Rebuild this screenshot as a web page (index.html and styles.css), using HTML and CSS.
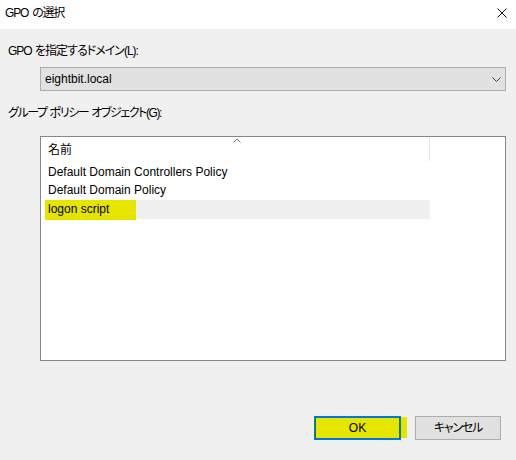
FILE: index.html
```html
<!DOCTYPE html>
<html lang="ja">
<head>
<meta charset="utf-8">
<title>GPO の選択</title>
<link rel="stylesheet" href="styles.css">
</head>
<body>
<div class="dialog">
  <div class="titlebar">
    <span class="title jp">GPO の選択</span>
    <svg class="close" width="10" height="10" viewBox="0 0 10 10"><path d="M0.5 0.5 L9.5 9.5 M9.5 0.5 L0.5 9.5" stroke="#111" stroke-width="1" fill="none"/></svg>
  </div>
  <div class="content">
    <div class="label label-domain jp">GPO を指定するドメイン(L):</div>
    <div class="combo">
      <span class="combo-text">eightbit.local</span>
      <svg class="chevron" width="9" height="5" viewBox="0 0 9 5"><path d="M0.5 0.5 L4.5 4.5 L8.5 0.5" stroke="#444" stroke-width="1" fill="none"/></svg>
    </div>
    <div class="label label-gpo jp">グループ ポリシー オブジェクト(G):</div>
    <div class="listbox">
      <div class="list-header">
        <div class="col-name">名前
          <svg class="sort" width="8" height="5" viewBox="0 0 8 5"><path d="M0.5 4.5 L4 1 L7.5 4.5" stroke="#777" stroke-width="1" fill="none"/></svg>
        </div>
        <div class="col-rest"></div>
      </div>
      <div class="row">Default Domain Controllers Policy</div>
      <div class="row">Default Domain Policy</div>
      <div class="row row-selected"><span class="marker">logon script</span></div>
    </div>
    <div class="buttons">
      <button class="btn btn-ok">OK</button>
      <button class="btn btn-cancel">キャンセル</button>
    </div>
  </div>
</div>
</body>
</html>
```
FILE: styles.css
```css
html, body {
  margin: 0;
  padding: 0;
}
body {
  width: 516px;
  height: 460px;
  background: #f0f0f0;
  font-family: "Liberation Sans", "Noto Sans CJK JP", sans-serif;
  font-size: 12px;
  color: #000;
  overflow: hidden;
}
.jp {
  font-feature-settings: "palt";
  letter-spacing: -1px;
}
.dialog {
  width: 516px;
  height: 460px;
  display: flex;
  flex-direction: column;
}
.titlebar {
  height: 29px;
  background: #fff;
  display: flex;
  align-items: center;
  justify-content: space-between;
  padding: 0 9px 0 5px;
  box-sizing: border-box;
}
.title {
  line-height: 16px;
  margin-top: -3px;
  letter-spacing: -1.2px;
  word-spacing: 2px;
}
.close {
  display: block;
  margin-top: -3px;
}
.content {
  display: flex;
  flex-direction: column;
  padding: 0 10px 0 8px;
}
.label {
  line-height: 16px;
  height: 16px;
}
.label-domain {
  margin-top: 14px;
  word-spacing: 1px;
}
.combo {
  margin: 8px 0 0 32px;
  height: 24px;
  box-sizing: border-box;
  border: 1px solid #adadad;
  background: #e1e1e1;
  display: flex;
  align-items: center;
  justify-content: space-between;
  padding: 0 4px 0 4px;
}
.combo-text {
  line-height: 16px;
}
.chevron {
  display: block;
}
.label-gpo {
  margin-top: 14px;
  letter-spacing: -1.4px;
  word-spacing: 1px;
}
.listbox {
  margin: 15px 0 0 32px;
  height: 225px;
  box-sizing: border-box;
  border: 1px solid #828790;
  background: #fff;
  display: flex;
  flex-direction: column;
}
.list-header {
  height: 25px;
  display: flex;
  flex-shrink: 0;
}
.col-name {
  position: relative;
  width: 389px;
  box-sizing: border-box;
  padding-left: 7px;
  border-right: 1px solid #e5e5e5;
  margin: 1px 0 0 0;
  height: 23px;
  line-height: 24px;
}
.sort {
  position: absolute;
  left: 192px;
  top: 0px;
}
.row {
  height: 19px;
  line-height: 19px;
  margin-left: 4px;
  width: 385px;
  padding-left: 3px;
  box-sizing: border-box;
}
.row:nth-child(2) {
  line-height: 20px;
}
.row-selected {
  background: #f0f0f0;
  padding-left: 0;
}
.marker {
  display: inline-block;
  background: #e5e500;
  width: 91px;
  height: 20px;
  padding-left: 3px;
  box-sizing: border-box;
}
.buttons {
  margin-top: 55px;
  display: flex;
  justify-content: flex-end;
  gap: 14px;
  padding-right: 5px;
}
.btn {
  font: inherit;
  height: 24px;
  margin: 0;
  box-sizing: border-box;
  padding: 0;
  line-height: 20px;
  color: #000;
}
.btn-ok {
  position: relative;
  width: 87px;
  border: 1px solid #0078d7;
  background: #e5e500;
  box-shadow: inset 1px 0 0 #1f7a1f, inset -1px 0 0 #1f7a1f, inset 0 1px 0 #0078d7, inset 0 -1px 0 #0078d7;
}
.btn-ok::after {
  content: "";
  position: absolute;
  left: 86px;
  top: 0px;
  width: 6px;
  height: 21px;
  background: #e5e500;
}
.btn-cancel {
  width: 86px;
  border: 1px solid #adadad;
  background: #e1e1e1;
  font-feature-settings: "palt";
  letter-spacing: -1.2px;
}
```
